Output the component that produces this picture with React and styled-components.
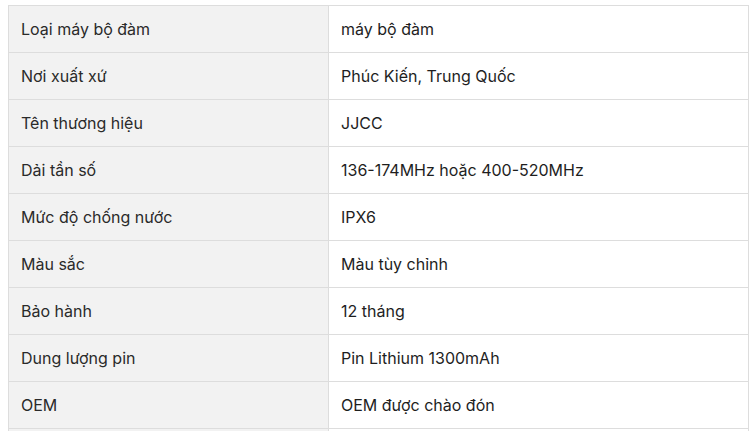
import React from 'react';
import styled, { createGlobalStyle } from 'styled-components';

const GlobalStyle = createGlobalStyle`
  html, body {
    margin: 0;
    padding: 0;
    background: #fff;
  }
  body {
    font-family: Inter, "Noto Sans", sans-serif;
  }
`;

const Wrap = styled.div`
  padding: 5px 0 0 8px;
`;

const SpecTable = styled.table`
  width: 741px;
  border-collapse: collapse;
  table-layout: fixed;
`;

const LabelCell = styled.td`
  width: 320px;
  height: 47px;
  padding: 0 12px;
  box-sizing: border-box;
  border: 1px solid #dddddd;
  background: #f2f2f2;
  color: #2a2a2a;
  font-size: 16px;
  line-height: 22px;
  vertical-align: middle;
`;

const ValueCell = styled(LabelCell)`
  width: auto;
  background: #fff;
  color: #1e1e1e;
`;

const specs = [
  ['Loại máy bộ đàm', 'máy bộ đàm'],
  ['Nơi xuất xứ', 'Phúc Kiến, Trung Quốc'],
  ['Tên thương hiệu', 'JJCC'],
  ['Dải tần số', '136-174MHz hoặc 400-520MHz'],
  ['Mức độ chống nước', 'IPX6'],
  ['Màu sắc', 'Màu tùy chỉnh'],
  ['Bảo hành', '12 tháng'],
  ['Dung lượng pin', 'Pin Lithium 1300mAh'],
  ['OEM', 'OEM được chào đón'],
  ['', ''],
];

const App = () => (
  <>
    <GlobalStyle />
    <Wrap>
      <SpecTable>
        <tbody>
          {specs.map(([label, value], i) => (
            <tr key={i}>
              <LabelCell>{label}</LabelCell>
              <ValueCell>{value}</ValueCell>
            </tr>
          ))}
        </tbody>
      </SpecTable>
    </Wrap>
  </>
);

export default App;
